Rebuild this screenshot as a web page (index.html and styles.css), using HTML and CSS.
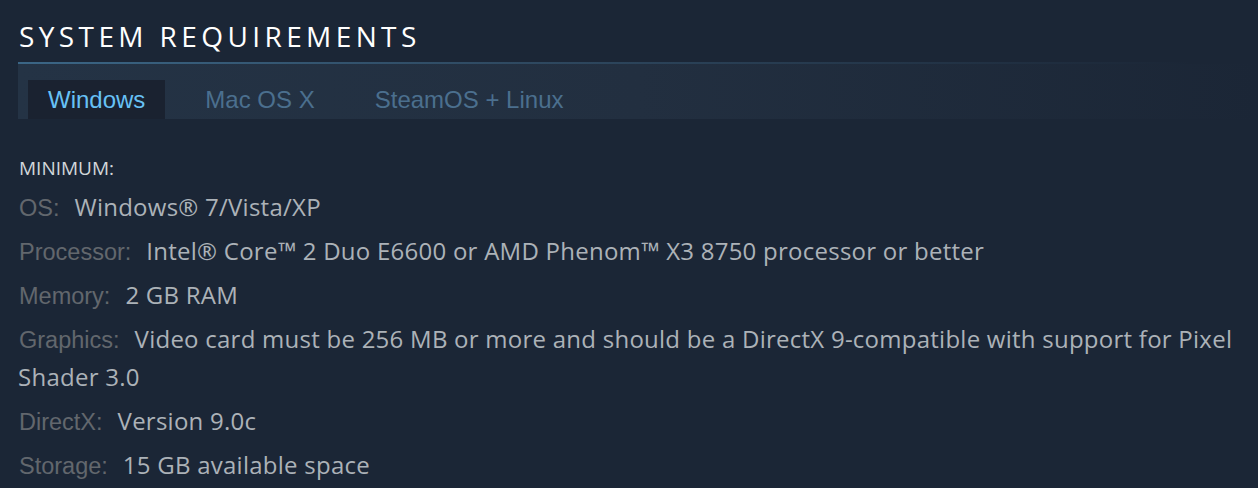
FILE: index.html
```html
<!DOCTYPE html>
<html lang="en">
<head>
<meta charset="utf-8">
<title>System Requirements</title>
<link rel="stylesheet" href="styles.css">
</head>
<body>
<div class="sysreq">
  <h2 class="title">System Requirements</h2>
  <div class="tabs">
    <div class="tab active">Windows</div>
    <div class="tab">Mac OS X</div>
    <div class="tab">SteamOS + Linux</div>
  </div>
  <div class="content">
    <div class="min">MINIMUM:</div>
    <ul class="list">
      <li><span class="label">OS:</span>Windows® 7/Vista/XP</li>
      <li><span class="label">Processor:</span>Intel® Core™ 2 Duo E6600 or AMD Phenom™ X3 8750 processor or better</li>
      <li><span class="label">Memory:</span>2 GB RAM</li>
      <li><span class="label">Graphics:</span>Video card must be 256 MB or more and should be a DirectX 9-compatible with support for Pixel Shader 3.0</li>
      <li><span class="label">DirectX:</span>Version 9.0c</li>
      <li><span class="label">Storage:</span>15 GB available space</li>
    </ul>
  </div>
</div>
</body>
</html>
```

FILE: styles.css
```css
html, body {
  margin: 0;
  padding: 0;
  background: #1b2636;
}
body {
  font-family: "Open Sans", "Liberation Sans", sans-serif;
  overflow: hidden;
}
.sysreq {
  padding: 0 18px 0 18px;
}
.title {
  margin: 0;
  padding: 20px 0 12px 1px;
  line-height: 32px;
  font-size: 28px;
  font-weight: 500;
  letter-spacing: 4.4px;
  text-transform: uppercase;
  color: #ffffff;
  background-image: linear-gradient(to right, #3b6686 0%, #2f4a62 40%, rgba(40,60,80,0) 96%);
  background-repeat: no-repeat;
  background-position: left bottom;
  background-size: 100% 2px;
}
.tabs {
  display: flex;
  align-items: flex-end;
  gap: 20px;
  height: 55px;
  padding-left: 10px;
  margin-right: -18px;
  box-sizing: border-box;
  background: linear-gradient(to right, #243345 0%, #222f40 50%, rgba(34,47,64,0) 100%);
}
.tab {
  padding: 0 20px;
  height: 39px;
  line-height: 39px;
  font-family: "Liberation Sans", Arial, sans-serif;
  font-size: 24px;
  color: #4b6f8e;
}
.tab.active {
  background: #1a2230;
  color: #67c1f5;
}
.content {
  padding-top: 37px;
}
.min {
  font-size: 19px;
  font-weight: 500;
  line-height: 24px;
  color: #d2d6da;
  padding-left: 1px;
}
.list {
  list-style: none;
  margin: 8px 0 0 0;
  padding: 0;
}
.list li {
  font-size: 24px;
  letter-spacing: 0.25px;
  line-height: 38px;
  margin-bottom: 6px;
  color: #acb2b8;
}
.label {
  font-family: "Liberation Sans", Arial, sans-serif;
  font-size: 23.5px;
  letter-spacing: 0;
  line-height: 1;
  color: #62676d;
  margin-right: 15px;
  padding-left: 1px;
}
```
